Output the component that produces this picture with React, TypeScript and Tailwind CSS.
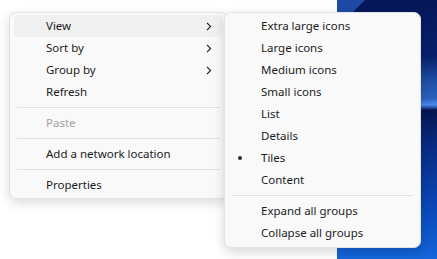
import React from "react";

const font = { fontFamily: '"Noto Sans", "Open Sans", sans-serif' };

function Chevron() {
  return (
    <svg width="6" height="9" viewBox="0 0 6 9" className="shrink-0">
      <path d="M1 0.8 L4.6 4.5 L1 8.2" fill="none" stroke="#1a1a1a" strokeWidth="1.1" />
    </svg>
  );
}

function Row({
  label,
  hover,
  disabled,
  sub,
  bullet,
}: {
  label: string;
  hover?: boolean;
  disabled?: boolean;
  sub?: boolean;
  bullet?: boolean;
}) {
  return (
    <div
      className={`relative flex h-[22px] items-center justify-between rounded-[4px] pl-[32px] pr-[11px] text-[11.5px] ${
        hover ? "bg-[#f0f0f0]" : ""
      } ${disabled ? "text-[#a3a3a3]" : "text-[#1b1b1b]"}`}
    >
      {bullet && (
        <span className="absolute left-[9px] top-[9px] h-[4px] w-[4px] rounded-full bg-[#2b2b2b]" />
      )}
      <span className="leading-none">{label}</span>
      {sub && <Chevron />}
    </div>
  );
}

function Sep({ inset }: { inset: string }) {
  return <div className={`my-[4px] h-px bg-[#e1e1e1] ${inset}`} />;
}

export default function App() {
  return (
    <div className="relative flex h-[259px] w-[437px] overflow-hidden bg-white" style={font}>
      <div className="w-[337px] shrink-0 bg-white" />
      <div className="relative flex-1">
        <svg width="100" height="259" viewBox="0 0 100 259" className="absolute inset-0 block">
          <defs>
            <linearGradient id="wall" x1="0" y1="0" x2="0" y2="1">
              <stop offset="0" stopColor="#061658" />
              <stop offset="0.22" stopColor="#08216c" />
              <stop offset="0.3" stopColor="#1d4a9e" />
              <stop offset="0.38" stopColor="#2a62bd" />
              <stop offset="0.405" stopColor="#4a8cf0" />
              <stop offset="0.425" stopColor="#061650" />
              <stop offset="0.55" stopColor="#08297e" />
              <stop offset="0.8" stopColor="#0b48b8" />
              <stop offset="1" stopColor="#1466db" />
            </linearGradient>
          </defs>
          <rect x="0" y="0" width="100" height="259" fill="url(#wall)" />
          <polygon points="0,0 28,0 14,14 0,14" fill="#1e4aa6" />
        </svg>
      </div>

      {/* main context menu */}
      <div className="absolute left-[9px] top-[12px] w-[219px] rounded-[7px] border border-[#e2e2e2] bg-[#f9f9f9] px-[4px] pb-[2px] pt-[2px] shadow-[0_4px_12px_rgba(0,0,0,0.14)]">
        <Row label="View" hover sub />
        <Row label="Sort by" sub />
        <Row label="Group by" sub />
        <Row label="Refresh" />
        <Sep inset="mx-[3px]" />
        <Row label="Paste" disabled />
        <Sep inset="mx-[3px]" />
        <Row label="Add a network location" />
        <Sep inset="mx-[3px]" />
        <Row label="Properties" />
      </div>

      {/* submenu */}
      <div className="absolute left-[224px] top-[12px] w-[197px] rounded-[7px] border border-[#e2e2e2] bg-[#f9f9f9] px-[4px] pb-[3px] pt-[2px] shadow-[0_4px_12px_rgba(0,0,0,0.16)]">
        <Row label="Extra large icons" />
        <Row label="Large icons" />
        <Row label="Medium icons" />
        <Row label="Small icons" />
        <Row label="List" />
        <Row label="Details" />
        <Row label="Tiles" bullet />
        <Row label="Content" />
        <Sep inset="mx-[3px]" />
        <Row label="Expand all groups" />
        <Row label="Collapse all groups" />
      </div>
    </div>
  );
}
